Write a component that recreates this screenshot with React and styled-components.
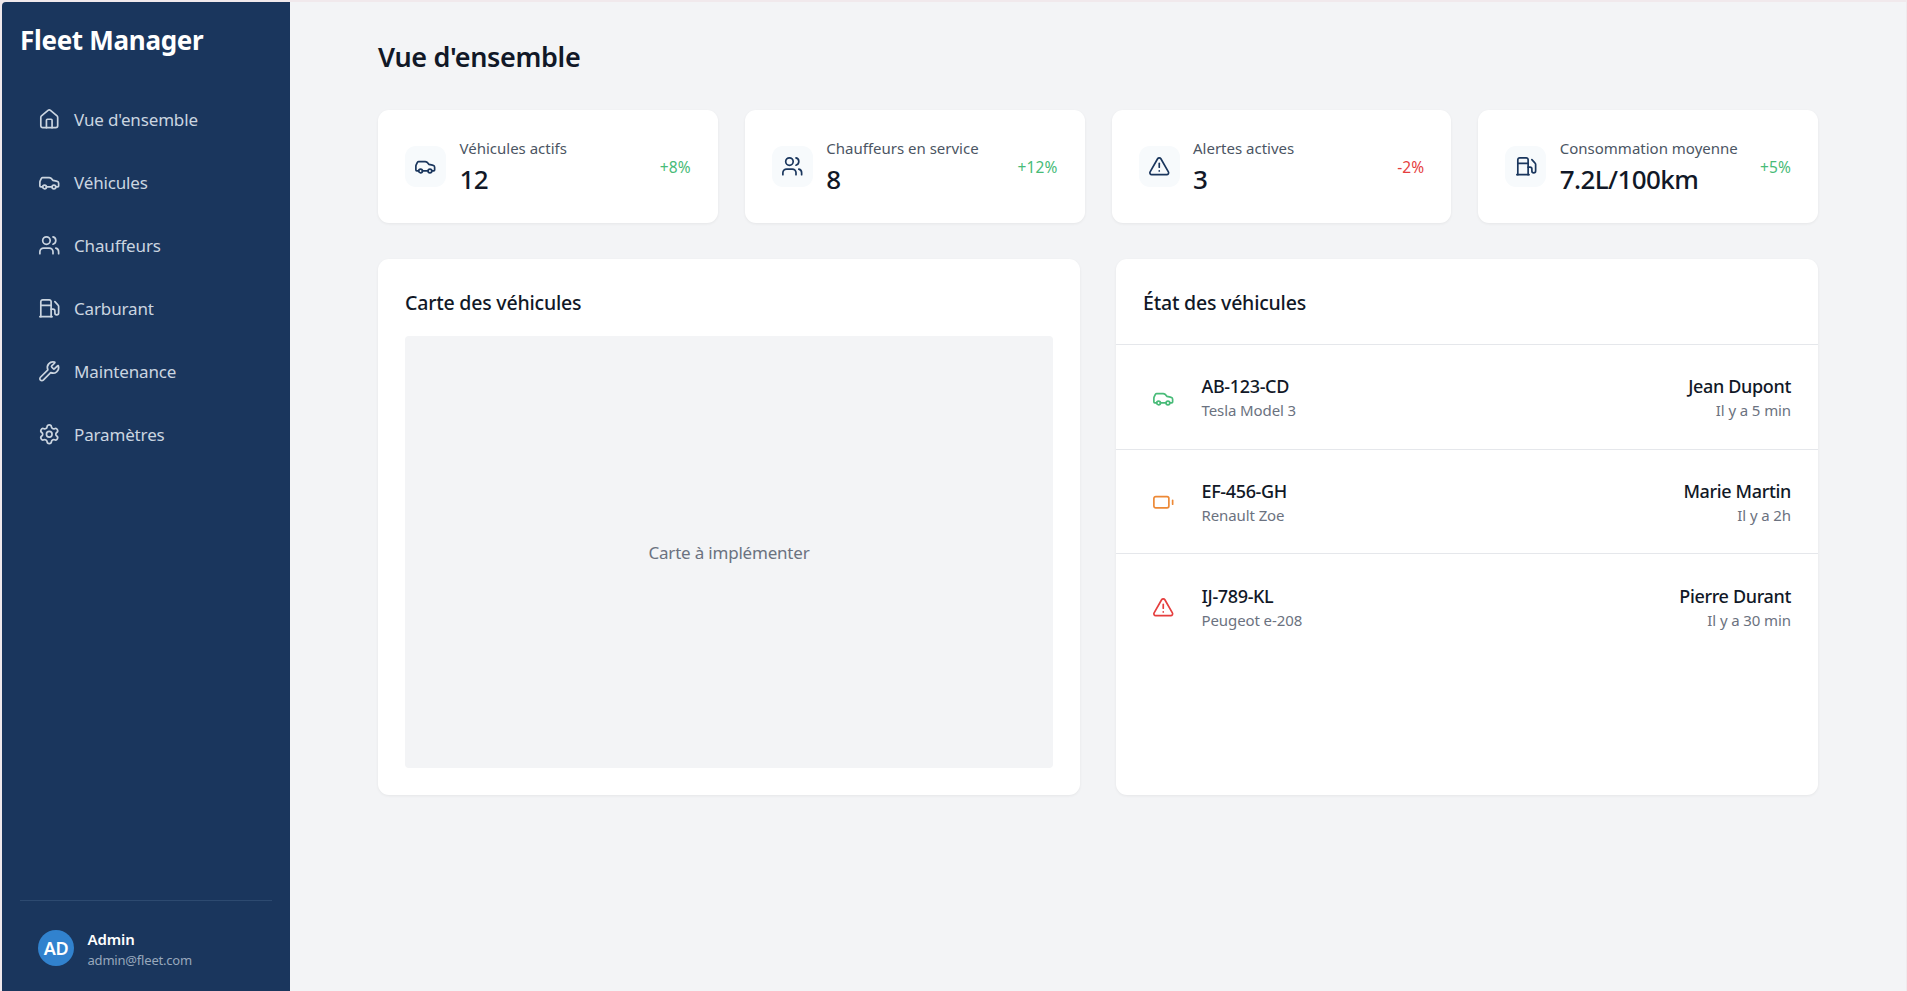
import React from 'react';
import styled, { createGlobalStyle } from 'styled-components';
import { House, Car, Users, Fuel, Wrench, Settings, TriangleAlert, Battery } from 'lucide-react';

const Global = createGlobalStyle`
  * { box-sizing: border-box; }
  html, body { margin: 0; padding: 0; height: 100%; }
  body {
    background: #f1e9ec;
    font-family: "Noto Sans", "Open Sans", "Liberation Sans", sans-serif;
    overflow: hidden;
  }
`;

const Page = styled.div`
  display: flex;
  height: 991px;
  padding: 2px 1px 0 2px;
`;

const Sidebar = styled.aside`
  width: 288px;
  flex: none;
  display: flex;
  flex-direction: column;
  background: #1a365d;
  color: #fff;
  padding: 18px;
  border-top-left-radius: 4px;
`;

const Logo = styled.h1`
  margin: 2px 0 34px;
  font-size: 26px;
  line-height: 36px;
  font-weight: 700;
  letter-spacing: -0.3px;
`;

const Nav = styled.nav`
  display: flex;
  flex-direction: column;
  gap: 9px;
  flex: 1;
`;

const NavItem = styled.a`
  display: flex;
  align-items: center;
  gap: 13.5px;
  height: 54px;
  padding: 0 18px;
  color: #cbd5e0;
  font-size: 17px;
  letter-spacing: -0.15px;
`;

const UserBox = styled.div`
  border-top: 1px solid #2d4a70;
  padding: 25px 18px 4.5px;
  display: flex;
  align-items: center;
  gap: 13.5px;
`;

const Avatar = styled.div`
  width: 36px;
  height: 36px;
  margin-top: 2px;
  border-radius: 50%;
  background: #3182ce;
  color: #fff;
  font-size: 18px;
  font-weight: 600;
  display: flex;
  align-items: center;
  justify-content: center;
  letter-spacing: -0.3px;
`;

const UserInfo = styled.div`
  padding-top: 3px;
`;

const UserName = styled.div`
  font-size: 15px;
  line-height: 20px;
  font-weight: 600;
  letter-spacing: -0.1px;
`;

const UserMail = styled.div`
  margin-top: 2px;
  font-size: 13px;
  line-height: 18px;
  color: #98a8bc;
  letter-spacing: -0.2px;
`;

const Main = styled.main`
  flex: 1;
  min-width: 0;
  background: #f3f4f6;
  padding: 36px 0;
`;

const Content = styled.div`
  width: 1440px;
  margin: 0 auto;
`;

const Title = styled.h2`
  margin: 0 0 34px;
  font-size: 27px;
  line-height: 38px;
  font-weight: 600;
  color: #111827;
  letter-spacing: -0.35px;
`;

const StatGrid = styled.div`
  display: grid;
  grid-template-columns: repeat(4, 1fr);
  gap: 27px;
  margin-bottom: 36px;
`;

const Card = styled.div`
  background: #fff;
  border-radius: 11px;
  box-shadow: 0 1px 3px rgba(0, 0, 0, 0.06);
`;

const StatCard = styled(Card)`
  height: 113px;
  padding: 0 27px;
  display: flex;
  align-items: center;
`;

const StatIcon = styled.div`
  width: 41px;
  height: 41px;
  border-radius: 11px;
  background: #f7fafc;
  color: #1a365d;
  display: flex;
  align-items: center;
  justify-content: center;
  margin-right: 13.5px;
  flex: none;
`;

const StatBody = styled.div`
  flex: 1;
  padding-top: 2px;
`;

const StatLabel = styled.div`
  font-size: 15px;
  line-height: 20px;
  color: #4b5563;
`;

const StatValue = styled.div`
  margin-top: 3px;
  font-size: 26px;
  line-height: 36px;
  font-weight: 500;
  color: #111827;
  letter-spacing: -0.6px;
`;

const Trend = styled.div`
  font-size: 15.5px;
  color: ${(p) => (p.$down ? '#e53e3e' : '#48bb78')};
  letter-spacing: 0.1px;
`;

const Panels = styled.div`
  display: grid;
  grid-template-columns: repeat(2, 1fr);
  gap: 36px;
`;

const MapPanel = styled(Card)`
  padding: 27px;
`;

const PanelTitle = styled.h3`
  margin: 0;
  font-size: 19.5px;
  line-height: 34px;
  font-weight: 500;
  color: #111827;
  letter-spacing: -0.2px;
`;

const MapBox = styled.div`
  height: 432px;
  margin-top: 16px;
  border-radius: 4px;
  background: #f3f4f6;
  color: #6b7280;
  font-size: 17px;
  letter-spacing: -0.2px;
  display: flex;
  align-items: center;
  justify-content: center;
`;

const StatusPanel = styled(Card)``;

const StatusHeader = styled.div`
  padding: 27px;
  height: 86px;
  border-bottom: 1px solid #e5e7eb;
`;

const Row = styled.div`
  height: 104.5px;
  padding: 2px 27px 0;
  display: flex;
  align-items: center;
  border-bottom: ${(p) => (p.$last ? 'none' : '1px solid #e5e7eb')};
`;

const RowIcon = styled.div`
  width: 22.5px;
  margin: 0 27px 0 9px;
  display: flex;
  color: ${(p) => p.$color};
`;

const RowMain = styled.div`
  flex: 1;
`;

const RowSide = styled.div`
  text-align: right;
`;

const RowStrong = styled.div`
  font-size: 18px;
  line-height: 25px;
  font-weight: 500;
  color: #111827;
  letter-spacing: -0.35px;
`;

const RowSub = styled.div`
  font-size: 15px;
  line-height: 22px;
  color: #6b7280;
  letter-spacing: -0.1px;
`;

const nav = [
  [House, "Vue d'ensemble"],
  [Car, 'Véhicules'],
  [Users, 'Chauffeurs'],
  [Fuel, 'Carburant'],
  [Wrench, 'Maintenance'],
  [Settings, 'Paramètres'],
];

const stats = [
  [Car, 'Véhicules actifs', '12', '+8%'],
  [Users, 'Chauffeurs en service', '8', '+12%'],
  [TriangleAlert, 'Alertes actives', '3', '-2%', true],
  [Fuel, 'Consommation moyenne', '7.2L/100km', '+5%'],
];

const rows = [
  [Car, '#48bb78', 'AB-123-CD', 'Tesla Model 3', 'Jean Dupont', 'Il y a 5 min'],
  [Battery, '#ed8936', 'EF-456-GH', 'Renault Zoe', 'Marie Martin', 'Il y a 2h'],
  [TriangleAlert, '#e53e3e', 'IJ-789-KL', 'Peugeot e-208', 'Pierre Durant', 'Il y a 30 min'],
];

export default function App() {
  return (
    <Page>
      <Global />
      <Sidebar>
        <Logo>Fleet Manager</Logo>
        <Nav>
          {nav.map(([Icon, label]) => (
            <NavItem key={label}>
              <Icon size={22.5} strokeWidth={1.8} />
              {label}
            </NavItem>
          ))}
        </Nav>
        <UserBox>
          <Avatar>AD</Avatar>
          <UserInfo>
            <UserName>Admin</UserName>
            <UserMail>admin@fleet.com</UserMail>
          </UserInfo>
        </UserBox>
      </Sidebar>
      <Main>
        <Content>
          <Title>Vue d'ensemble</Title>
          <StatGrid>
            {stats.map(([Icon, label, value, trend, down]) => (
              <StatCard key={label}>
                <StatIcon>
                  <Icon size={22.5} strokeWidth={1.8} />
                </StatIcon>
                <StatBody>
                  <StatLabel>{label}</StatLabel>
                  <StatValue>{value}</StatValue>
                </StatBody>
                <Trend $down={down}>{trend}</Trend>
              </StatCard>
            ))}
          </StatGrid>
          <Panels>
            <MapPanel>
              <PanelTitle>Carte des véhicules</PanelTitle>
              <MapBox>Carte à implémenter</MapBox>
            </MapPanel>
            <StatusPanel>
              <StatusHeader>
                <PanelTitle>État des véhicules</PanelTitle>
              </StatusHeader>
              {rows.map(([Icon, color, plate, model, driver, time], i) => (
                <Row key={plate} $last={i === rows.length - 1}>
                  <RowIcon $color={color}>
                    <Icon size={22.5} strokeWidth={1.8} />
                  </RowIcon>
                  <RowMain>
                    <RowStrong>{plate}</RowStrong>
                    <RowSub>{model}</RowSub>
                  </RowMain>
                  <RowSide>
                    <RowStrong>{driver}</RowStrong>
                    <RowSub>{time}</RowSub>
                  </RowSide>
                </Row>
              ))}
            </StatusPanel>
          </Panels>
        </Content>
      </Main>
    </Page>
  );
}
